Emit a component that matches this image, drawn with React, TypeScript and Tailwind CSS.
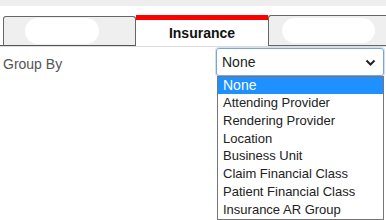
import React from 'react';

const options = [
  'Attending Provider',
  'Rendering Provider',
  'Location',
  'Business Unit',
  'Claim Financial Class',
  'Patient Financial Class',
  'Insurance AR Group',
];

const App: React.FC = () => {
  return (
    <div className="w-[386px] h-[220px] overflow-hidden bg-white font-['Liberation_Sans',Arial,sans-serif] relative">
      <div className="h-[6px] bg-[#eeeeee]" />
      <div className="flex items-end pt-[9px] border-b border-[#dddddd]">
        <div className="w-[3px] h-[30px] border-b border-[#555]" />
        <div className="w-[133px] h-[30px] border border-[#666] border-b-[#555] rounded-t-[3px] bg-[#efefef] flex items-center pl-[21px]">
          <div className="w-[74px] h-[26px] rounded-full bg-white" />
        </div>
        <div className="w-[132px] h-[31px] flex flex-col">
          <div className="h-[5px] bg-[#ff0000]" />
          <div className="flex-1 flex items-center justify-center text-[14px] font-bold text-[#111]">Insurance</div>
        </div>
        <div className="flex-1 h-[31px] border border-r-0 border-[#666] rounded-tl-[3px] bg-[#efefef] flex items-center pl-[13px] -mr-[10px]">
          <div className="w-[93px] h-[25px] rounded-full bg-white" />
        </div>
      </div>
      <div className="flex justify-between pr-[2px]">
        <div className="pl-[3px] pt-[7px] text-[14px] text-[#555]">Group By</div>
        <div className="relative mt-[1px]">
          <div className="w-[168px] h-[28px] border border-[#7da2dc] rounded-[3px] flex items-center justify-between px-[5px] text-[14px] text-[#222] shadow-[0_0_0_1px_rgba(125,162,220,0.35)]">
            <span>None</span>
            <svg width="11" height="7" viewBox="0 0 11 7" className="mr-[2px]">
              <path d="M1.5 1.5 L5.5 5.5 L9.5 1.5" fill="none" stroke="#222" strokeWidth="2" />
            </svg>
          </div>
          <div className="absolute left-[1px] top-[28px] w-[167px] border border-[#767676] bg-white flex flex-col">
            <div className="h-[17px] bg-[#1e90ff] text-white text-[14px] leading-[17px] pl-[5px]">None</div>
            {options.map((o) => (
              <div key={o} className="h-[17.8px] text-[13px] leading-[17.8px] pl-[5px] text-[#222]">
                {o}
              </div>
            ))}
          </div>
        </div>
      </div>
    </div>
  );
};

export default App;
